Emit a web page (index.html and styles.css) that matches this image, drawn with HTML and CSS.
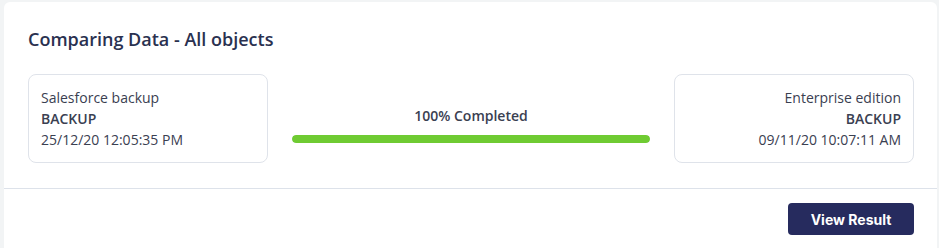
FILE: index.html
```html
<!DOCTYPE html>
<html>
<head>
<meta charset="utf-8">
<link rel="stylesheet" href="styles.css">
</head>
<body>
<div class="card">
  <div class="card-body">
    <h2 class="title">Comparing Data - All objects</h2>
    <div class="compare">
      <div class="source">
        <div class="name">Salesforce backup</div>
        <div class="kind">BACKUP</div>
        <div class="date">25/12/20 12:05:35 PM</div>
      </div>
      <div class="progress">
        <div class="progress-label">100% Completed</div>
        <div class="progress-track"><div class="progress-fill" style="width:100%"></div></div>
      </div>
      <div class="source right">
        <div class="name">Enterprise edition</div>
        <div class="kind">BACKUP</div>
        <div class="date">09/11/20 10:07:11 AM</div>
      </div>
    </div>
  </div>
  <div class="card-footer">
    <button class="btn">View Result</button>
  </div>
</div>
</body>
</html>
```

FILE: styles.css
```css
html, body {
  margin: 0;
  padding: 0;
  background: #f2f4f5;
  height: 100%;
  overflow: hidden;
}
body {
  padding: 2px 2px 0 4px;
  box-sizing: border-box;
  display: flex;
  flex-direction: column;
  font-family: "Open Sans", sans-serif;
  color: #3a4051;
}
.card {
  flex: 1;
  background: #ffffff;
  border-radius: 6px 6px 0 0;
}
.card-body {
  padding: 25px 23px 25px 24px;
}
.title {
  margin: 0 0 23px 0;
  font-size: 18px;
  line-height: 24px;
  font-weight: 600;
  color: #2a3150;
}
.compare {
  display: flex;
  align-items: flex-start;
  gap: 24px;
}
.source {
  width: 240px;
  box-sizing: border-box;
  border: 1px solid #dfe3ea;
  border-radius: 8px;
  padding: 12px;
  font-size: 14px;
  line-height: 21px;
}
.source.right {
  text-align: right;
}
.kind {
  font-weight: 600;
}
.progress {
  flex: 1;
  padding-top: 32px;
  display: flex;
  flex-direction: column;
}
.progress-label {
  text-align: center;
  font-size: 14px;
  line-height: 20px;
  font-weight: 600;
  color: #3a4051;
}
.progress-track {
  margin-top: 9px;
  height: 8px;
  border-radius: 4px;
  background: #e6e9ee;
  overflow: hidden;
}
.progress-fill {
  height: 100%;
  background: #6fcb32;
  border-radius: 4px;
}
.card-footer {
  border-top: 1px solid #dde2ea;
  padding: 14px 23px 0 24px;
  display: flex;
  justify-content: flex-end;
}
.btn {
  font-family: "Inter", "Roboto", sans-serif;
  font-size: 14px;
  font-weight: 700;
  color: #ffffff;
  background: #262b5e;
  border: none;
  border-radius: 4px;
  width: 126px;
  height: 32px;
  padding: 0;
}
```
